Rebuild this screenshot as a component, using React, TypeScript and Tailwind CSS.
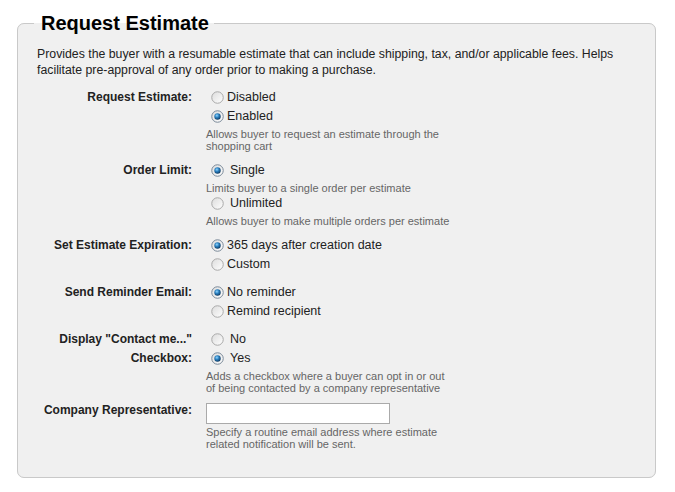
import React from "react";

type Opt = { text: string; checked?: boolean; help?: string[] };

const Radio = ({ checked }: { checked?: boolean }) => (
  <svg width="13" height="13" viewBox="0 0 13 13" className="ml-[5px] mr-[3px] shrink-0">
    <defs>
      <linearGradient id="rfill" x1="0" y1="0" x2="1" y2="1">
        <stop offset="0" stopColor="#dcdcdc" />
        <stop offset="1" stopColor="#ffffff" />
      </linearGradient>
      <radialGradient id="rdot" cx="0.4" cy="0.35" r="0.7">
        <stop offset="0" stopColor="#8fd6ff" />
        <stop offset="0.45" stopColor="#2a7fbf" />
        <stop offset="1" stopColor="#0c3358" />
      </radialGradient>
    </defs>
    <circle cx="6.5" cy="6.5" r="5.75" fill="url(#rfill)" stroke={checked ? "#7b8a99" : "#a9a9a9"} strokeWidth="1" />
    {checked && <circle cx="6.5" cy="6.5" r="3.2" fill="url(#rdot)" />}
  </svg>
);

const Help = ({ lines }: { lines: string[] }) => (
  <div className="mt-[2px] text-[11px] leading-[12px] text-[#666]">
    {lines.map((l) => (
      <div key={l}>{l}</div>
    ))}
  </div>
);

function Options({ opts, indent }: { opts: Opt[]; indent?: boolean }) {
  return (
    <div>
      {opts.map((o) => (
        <div key={o.text}>
          <div className="flex h-[19px] items-center">
            <Radio checked={o.checked} />
            <span className={indent ? "ml-[3px] text-[12.5px]" : "text-[12.5px]"}>{o.text}</span>
          </div>
          {o.help && <Help lines={o.help} />}
        </div>
      ))}
    </div>
  );
}

const Label = ({ children }: { children: React.ReactNode }) => (
  <div className="text-right text-[12px] font-bold leading-[19px]">{children}</div>
);

export default function App() {
  return (
    <div
      className="min-h-screen bg-white pl-[17px] pt-[9px] text-[#222]"
      style={{ fontFamily: '"Liberation Sans", Arial, sans-serif' }}
    >
      <fieldset className="w-[639px] rounded-[7px] border border-[#c9c9c9] bg-[#f0f0f0] pb-[27px] pl-[19px] pr-[19px] pt-[9px]">
        <legend className="-ml-[3px] pl-[7px] pr-[5px] text-[20px] font-bold leading-[28px] text-black">
          Request Estimate
        </legend>

        <p className="text-[12.3px] leading-[16px]">
          Provides the buyer with a resumable estimate that can include shipping, tax, and/or applicable fees. Helps
          facilitate pre-approval of any order prior to making a purchase.
        </p>

        <div className="mt-[10px] grid grid-cols-[155px_1fr] gap-x-[14px] gap-y-[9px]">
          <Label>Request Estimate:</Label>
          <Options
            opts={[
              { text: "Disabled" },
              {
                text: "Enabled",
                checked: true,
                help: ["Allows buyer to request an estimate through the", "shopping cart"],
              },
            ]}
          />

          <Label>Order Limit:</Label>
          <Options
            indent
            opts={[
              { text: "Single", checked: true, help: ["Limits buyer to a single order per estimate"] },
              { text: "Unlimited", help: ["Allows buyer to make multiple orders per estimate"] },
            ]}
          />

          <Label>Set Estimate Expiration:</Label>
          <Options opts={[{ text: "365 days after creation date", checked: true }, { text: "Custom" }]} />

          <Label>Send Reminder Email:</Label>
          <Options opts={[{ text: "No reminder", checked: true }, { text: "Remind recipient" }]} />

          <Label>Display "Contact me..." Checkbox:</Label>
          <Options
            indent
            opts={[
              { text: "No" },
              {
                text: "Yes",
                checked: true,
                help: ["Adds a checkbox where a buyer can opt in or out", "of being contacted by a company representative"],
              },
            ]}
          />

          <div className="text-right text-[12px] font-bold leading-[15px]">Company Representative:</div>
          <div>
            <input type="text" className="block h-[21px] w-[184px] border border-[#aaa] bg-white px-1 text-[13px]" />
            <Help lines={["Specify a routine email address where estimate", "related notification will be sent."]} />
          </div>
        </div>
      </fieldset>
    </div>
  );
}
